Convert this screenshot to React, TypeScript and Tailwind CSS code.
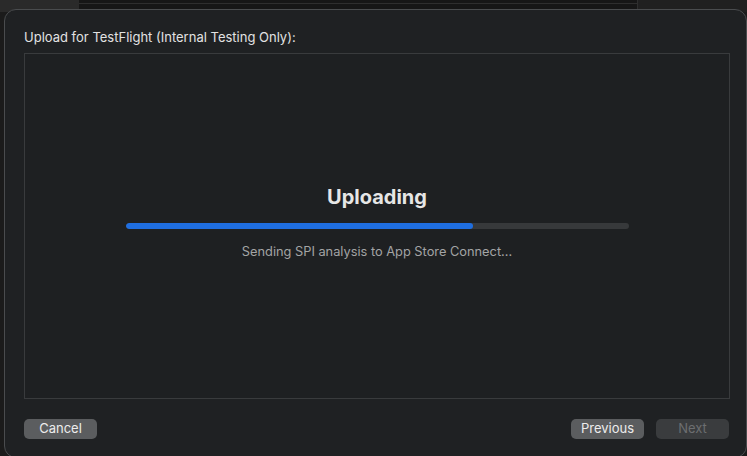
import React from "react";

const font = { fontFamily: "Inter, 'Noto Sans', 'Liberation Sans', sans-serif" };

function Button({ label, disabled }: { label: string; disabled?: boolean }) {
  return (
    <div
      className={
        "flex h-[20px] w-[73px] items-center justify-center rounded-[5px] pb-px text-[13px] leading-none " +
        (disabled ? "bg-[#3a3c3e] text-[#6c6e70]" : "bg-[#5b5d5f] text-[#ececec]")
      }
    >
      {label}
    </div>
  );
}

export default function App() {
  const progress = 0.69;
  return (
    <div className="relative h-[456px] w-[747px] overflow-hidden bg-[#1b1b1b]" style={font}>
      {/* window behind the sheet */}
      <div className="absolute left-0 top-0 h-[12px] w-[79px] bg-[#2a2a2a]" />
      <div className="absolute left-[79px] top-0 h-[12px] w-[558px] bg-[#161616]">
        <div className="mt-[3px] h-px w-full bg-[#2e2e2e]" />
      </div>
      <div className="absolute left-[637px] top-0 h-[12px] w-px bg-[#2e2e2e]" />
      <div className="absolute left-[638px] top-0 h-[12px] w-[109px] bg-[#202020]" />

      {/* sheet */}
      <div className="relative ml-[4px] mt-[9px] flex h-[449px] w-[743px] flex-col rounded-[12px] border border-[#4a4c4e] bg-[#1f2123] pl-[19px] pt-[19px]">
        <div className="h-[16px] text-[13px] leading-[16px] text-[#e2e2e2]">
          Upload for TestFlight (Internal Testing Only):
        </div>

        <div className="mt-[8px] flex h-[346px] w-[706px] flex-col items-center border border-[#393b3d] bg-[#1e2022]">
          <div className="mt-[131px] text-[20px] font-bold leading-[24px] text-[#e6e6e6]">Uploading</div>
          <div className="mt-[14px] h-[6px] w-[503px] overflow-hidden rounded-full bg-[#37393b]">
            <div className="h-full rounded-full bg-[#1f6ee0]" style={{ width: `${progress * 100}%` }} />
          </div>
          <div className="mt-[15px] text-[12.8px] leading-[16px] text-[#a3a4a5]">
            Sending SPI analysis to App Store Connect...
          </div>
        </div>

        <div className="mt-[20px] flex w-[705px] items-center">
          <Button label="Cancel" />
          <div className="flex-1" />
          <Button label="Previous" />
          <div className="w-[12px]" />
          <Button label="Next" disabled />
        </div>
      </div>
    </div>
  );
}
